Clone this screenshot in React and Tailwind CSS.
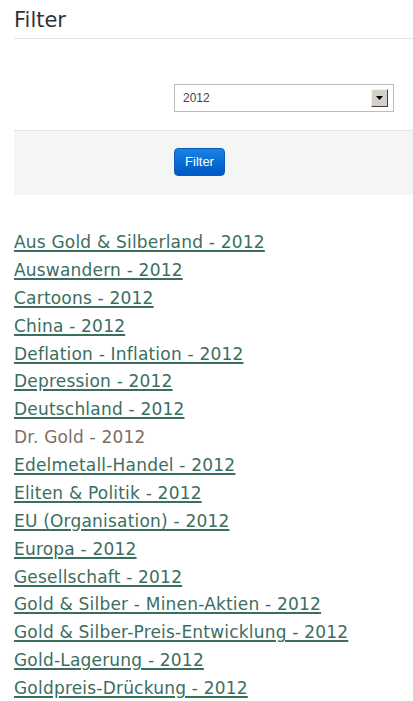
const links = [
  "Aus Gold & Silberland - 2012",
  "Auswandern - 2012",
  "Cartoons - 2012",
  "China - 2012",
  "Deflation - Inflation - 2012",
  "Depression - 2012",
  "Deutschland - 2012",
  "Dr. Gold - 2012",
  "Edelmetall-Handel - 2012",
  "Eliten & Politik - 2012",
  "EU (Organisation) - 2012",
  "Europa - 2012",
  "Gesellschaft - 2012",
  "Gold & Silber - Minen-Aktien - 2012",
  "Gold & Silber-Preis-Entwicklung - 2012",
  "Gold-Lagerung - 2012",
  "Goldpreis-Drückung - 2012",
];

export default function App() {
  return (
    <div className="min-h-[701px] bg-white pl-[14px] overflow-hidden font-['DejaVu_Sans',Verdana,sans-serif]">
      <h2 className="pt-[8px] pb-[6px] text-[21px] leading-[24px] text-[#333] border-b border-[#e5e5e5]">
        Filter
      </h2>

      <div className="h-[91px] flex items-end pb-[18px] pl-[160px]">
        <div className="w-[220px] h-[28px] border border-[#bcbcbc] bg-white flex items-center justify-between pl-[8px] pr-[5px] font-['Liberation_Sans',Arial,sans-serif] text-[12px] text-[#444]">
          <span>2012</span>
          <span className="w-[17px] h-[18px] bg-[#d4d0c8] border border-t-[#f4f2ee] border-l-[#f4f2ee] border-r-[#404040] border-b-[#404040] flex items-center justify-center">
            <svg width="7" height="4" viewBox="0 0 7 4">
              <path d="M0 0h7L3.5 4z" fill="#000" />
            </svg>
          </span>
        </div>
      </div>

      <div className="h-[65px] bg-[#f5f5f5] border-t border-[#e5e5e5] pt-[17px] pl-[160px]">
        <button className="w-[51px] h-[28px] rounded-[4px] bg-gradient-to-b from-[#1a82e6] to-[#0058c4] border border-[#0a5cbf] text-white text-[13px] font-['Liberation_Sans',Arial,sans-serif]">
          Filter
        </button>
      </div>

      <ul className="pt-[34px] flex flex-col">
        {links.map((l) => (
          <li key={l} className="h-[27.875px] text-[17px] tracking-[0.2px] leading-[27.875px] whitespace-nowrap">
            {l === "Dr. Gold - 2012" ? (
              <span className="text-[#7c6e63]">{l}</span>
            ) : (
              <a href="#" className="text-[#3b6e5f] underline decoration-2 underline-offset-[2px]">
                {l}
              </a>
            )}
          </li>
        ))}
      </ul>
    </div>
  );
}
